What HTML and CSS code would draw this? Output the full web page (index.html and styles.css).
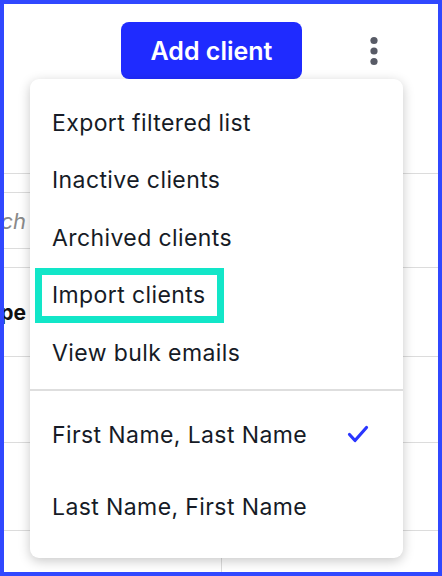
FILE: index.html
```html
<!DOCTYPE html>
<html>
<head>
	<title>Clients</title>
	<link rel="stylesheet" href="styles.css">
</head>
<body>
	<div class="frame">
		<!-- top toolbar -->
		<div class="toolbar">
			<button class="add-btn">Add client</button>
			<div class="kebab">
				<svg width="24" height="30" viewBox="0 0 24 30">
					<circle cx="12" cy="4.5" r="3.6" fill="#585b66"/>
					<circle cx="12" cy="15" r="3.6" fill="#585b66"/>
					<circle cx="12" cy="25.5" r="3.6" fill="#585b66"/>
				</svg>
			</div>
		</div>

		<!-- table behind the menu -->
		<div class="filter-row">
			<div class="search-box">
				<div class="clip"><span class="placeholder">Search</span></div>
			</div>
		</div>
		<div class="row header-row">
			<div class="clip"><span class="col-title">Type</span></div>
		</div>
		<div class="row row-a"></div>
		<div class="row row-b"></div>
		<div class="row last-row">
			<div class="cell"></div>
			<div class="cell"></div>
		</div>

		<!-- dropdown menu -->
		<div class="menu">
			<ul class="menu-group">
				<li>Export filtered list</li>
				<li>Inactive clients</li>
				<li>Archived clients</li>
				<li class="marked">Import clients</li>
				<li>View bulk emails</li>
			</ul>
			<ul class="menu-group sort-group">
				<li>First Name, Last Name
					<svg class="check" width="22" height="20" viewBox="0 0 22 20">
						<path d="M2.5 9.5 L8 15.5 L19.5 2.5" fill="none" stroke="#2a36ff" stroke-width="3.2" stroke-linecap="round" stroke-linejoin="round"/>
					</svg>
				</li>
				<li>Last Name, First Name</li>
			</ul>
		</div>
	</div>
</body>
</html>
```

FILE: styles.css
```css
body {
	margin: 0;
	font-family: Inter, "Noto Sans", sans-serif;
}

.frame {
	position: relative;
	width: 442px;
	height: 576px;
	box-sizing: border-box;
	border: 4px solid #3048ff;
	background-color: white;
	overflow: hidden;
}

/* toolbar with the main action */
.toolbar {
	height: 169px;
	display: flex;
	justify-content: flex-end;
	align-items: flex-start;
	padding: 18px 52px 0 0;
	box-sizing: border-box;
}

.add-btn {
	width: 181px;
	height: 57px;
	border: none;
	border-radius: 8px;
	background-color: #1f2bff;
	color: white;
	font-family: Inter, sans-serif;
	font-size: 25px;
	font-weight: 600;
	padding: 0;
}

.kebab {
	margin-left: 60px;
	height: 57px;
	display: flex;
	align-items: center;
}

.kebab svg {
	display: block;
}

/* table rows behind the menu */
.filter-row {
	border-top: 1px solid #dcdcdc;
	padding: 18px 0;
}

.search-box {
	width: 300px;
	height: 55px;
	border-top: 1px solid #dcdcdc;
	border-bottom: 1px solid #dcdcdc;
	display: flex;
	align-items: center;
}

.clip {
	width: 22px;
	overflow: hidden;
	display: flex;
	justify-content: flex-end;
	white-space: nowrap;
}

.placeholder {
	font-size: 22px;
	font-style: italic;
	color: #8a8a8a;
}

.row {
	border-top: 1px solid #dcdcdc;
	box-sizing: border-box;
}

.header-row {
	height: 89px;
	display: flex;
	align-items: center;
}

.col-title {
	font-size: 21px;
	font-weight: 700;
	color: #111;
}

.row-a {
	height: 86px;
}

.row-b {
	height: 88px;
}

.last-row {
	height: 42px;
	display: flex;
}

.last-row .cell {
	width: 225px;
	border-right: 1px solid #dcdcdc;
}

.last-row .cell + .cell {
	border-right: none;
}

/* dropdown menu */
.menu {
	position: absolute;
	left: 26px;
	top: 75px;
	width: 373px;
	background-color: white;
	border-radius: 9px;
	box-shadow: 0 3px 12px rgba(0, 0, 0, 0.22);
}

.menu-group {
	list-style: none;
	margin: 0;
	padding: 15px 0 7px 0;
}

.menu-group li {
	position: relative;
	height: 57.5px;
	display: flex;
	align-items: center;
	padding: 0 22px;
	font-size: 23px;
	color: #161b26;
	letter-spacing: 0.4px;
}

.sort-group {
	border-top: 2px solid #dedede;
	padding: 8px 0 15px 0;
}

.sort-group li {
	height: 72px;
	justify-content: space-between;
}

.check {
	margin-right: 12px;
}

/* annotation box round one item */
.marked::after {
	content: "";
	position: absolute;
	left: 5px;
	top: 1px;
	width: 175px;
	height: 41px;
	border: 7px solid #12e6c8;
}
```
